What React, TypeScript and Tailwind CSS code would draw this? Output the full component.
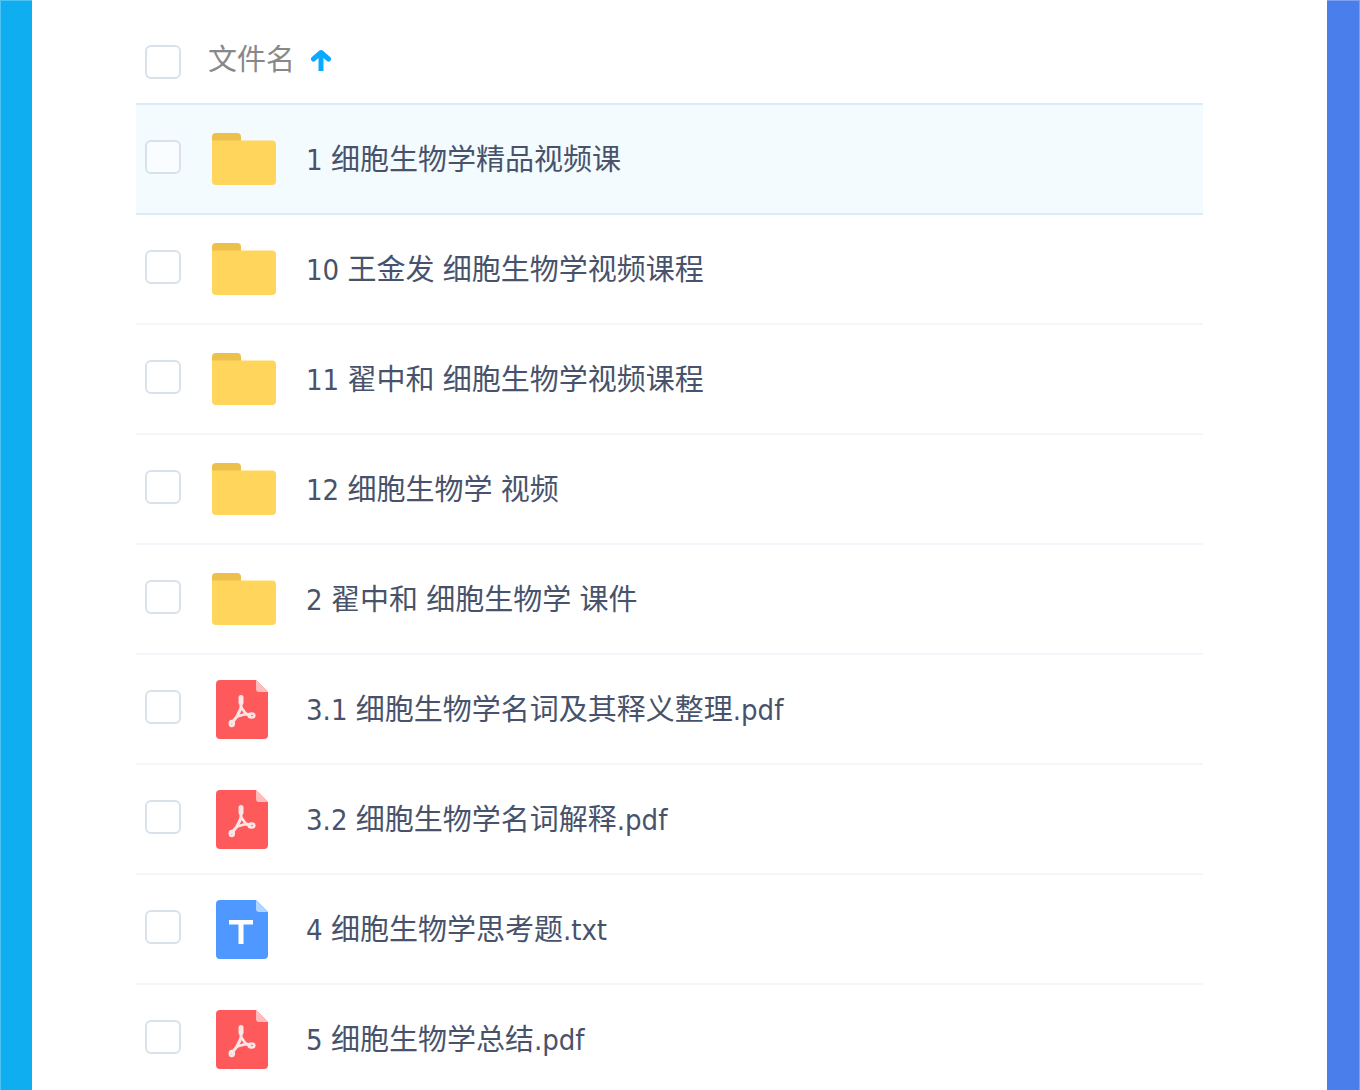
import * as React from 'react'

type FileKind = 'folder' | 'pdf' | 'txt'

type FileItem = {
  name: string
  kind: FileKind
}

const files: FileItem[] = [
  { name: '1 细胞生物学精品视频课', kind: 'folder' },
  { name: '10 王金发 细胞生物学视频课程', kind: 'folder' },
  { name: '11 翟中和 细胞生物学视频课程', kind: 'folder' },
  { name: '12 细胞生物学 视频', kind: 'folder' },
  { name: '2 翟中和 细胞生物学 课件', kind: 'folder' },
  { name: '3.1 细胞生物学名词及其释义整理.pdf', kind: 'pdf' },
  { name: '3.2 细胞生物学名词解释.pdf', kind: 'pdf' },
  { name: '4 细胞生物学思考题.txt', kind: 'txt' },
  { name: '5 细胞生物学总结.pdf', kind: 'pdf' },
]

function FolderIcon() {
  return (
    <svg width="64" height="52" viewBox="0 0 64 52" aria-hidden="true">
      <path d="M0 12V4a4 4 0 0 1 4-4h21a4 4 0 0 1 4 4v8z" fill="#ecc04b" />
      <path d="M0 7.500h60a4 4 0 0 1 4 4V48a4 4 0 0 1-4 4H4a4 4 0 0 1-4-4z" fill="#ffd55c" />
    </svg>
  )
}

function PdfIcon() {
  return (
    <svg width="52" height="59" viewBox="0 0 52 59" aria-hidden="true">
      <path d="M4 0h36l12 12v43a4 4 0 0 1-4 4H4a4 4 0 0 1-4-4V4a4 4 0 0 1 4-4z" fill="#ff5a5b" />
      <path d="M40 0l12 12h-9a3 3 0 0 1-3-3z" fill="#ffbcbc" />
      <g fill="none" stroke="#ffe6e6" strokeWidth="2.600" strokeLinecap="round" strokeLinejoin="round">
        <path d="M25 17.500v5" strokeWidth="5" />
        <path d="M25 22v6l-4 8.500-5 6" strokeWidth="3" />
        <path d="M25 27l5 7-9 2.500" />
        <path d="M30 34l4 1" strokeWidth="3" />
        <ellipse cx="35.500" cy="35.500" rx="2.800" ry="2" />
        <ellipse cx="15.800" cy="43.500" rx="2" ry="2.400" />
      </g>
    </svg>
  )
}

function TxtIcon() {
  return (
    <svg width="52" height="59" viewBox="0 0 52 59" aria-hidden="true">
      <path d="M4 0h36l12 12v43a4 4 0 0 1-4 4H4a4 4 0 0 1-4-4V4a4 4 0 0 1 4-4z" fill="#4f98ff" />
      <path d="M40 0l12 12h-9a3 3 0 0 1-3-3z" fill="#b0d6ff" />
      <rect x="13" y="20" width="24" height="4.500" fill="#fff" />
      <rect x="22.500" y="20" width="5" height="24" fill="#fff" />
    </svg>
  )
}

function FileIcon({ kind }: { kind: FileKind }) {
  if (kind === 'folder') return <FolderIcon />
  return <span className="pl-1">{kind === 'pdf' ? <PdfIcon /> : <TxtIcon />}</span>
}

const checkboxClass =
  'block h-[34px] w-9 appearance-none rounded-md border-2 border-[#d9e1eb] bg-white/60 checked:border-[#09aaff] checked:bg-[#09aaff]'

export default function App() {
  const [selected, setSelected] = React.useState<string[]>([])
  const [hovered, setHovered] = React.useState(files[0].name)
  const [ascending, setAscending] = React.useState(true)

  const rows = ascending ? files : [...files].reverse()
  const allSelected = selected.length === files.length

  const toggle = (name: string) => {
    setSelected((prev) => (prev.includes(name) ? prev.filter((n) => n !== name) : [...prev, name]))
  }

  return (
    <div className="flex min-h-screen bg-white font-['DejaVu_Sans_Condensed','Noto_Sans_CJK_SC',sans-serif]">
      <div className="w-8 shrink-0 border-t border-l border-[#4fc3f4] bg-[#0eaef0]" />

      <main className="min-w-0 flex-1 pr-31 pl-26">
        <table className="w-full border-separate border-spacing-0 text-left text-[29px] leading-10 text-[#48536b]">
          <thead>
            <tr className="h-[105px]">
              <th className="w-18 border-b-2 border-[#dcebfc] pt-5 pl-[9px] font-normal">
                <input
                  type="checkbox"
                  aria-label="全选"
                  className={checkboxClass}
                  checked={allSelected}
                  onChange={() => setSelected(allSelected ? [] : files.map((f) => f.name))}
                />
              </th>
              <th
                className="border-b-2 border-[#dcebfc] pt-4 font-normal text-[#888]"
                aria-sort={ascending ? 'ascending' : 'descending'}
              >
                <button type="button" className="flex items-center gap-4" onClick={() => setAscending(!ascending)}>
                  文件名
                  <svg
                    className={ascending ? '' : 'rotate-180'}
                    width="20"
                    height="24"
                    viewBox="0 0 20 24"
                    fill="none"
                    stroke="#09aaff"
                    strokeWidth="5"
                    aria-hidden="true"
                  >
                    <path d="M2.500 11L10 4.500 17.500 11" strokeLinecap="round" strokeLinejoin="round" />
                    <path d="M10 5v18" />
                  </svg>
                </button>
              </th>
            </tr>
          </thead>
          <tbody>
            {rows.map((file, i) => {
              const active = file.name === hovered
              const cell = active ? 'border-b-2 border-[#dcebfc] bg-[#f3fbff]' : 'border-b-2 border-[#f3f7fc]'
              return (
                <tr key={file.name} className="h-[110px]" onMouseEnter={() => setHovered(file.name)}>
                  <td className={`${cell} pb-1 pl-[9px]`}>
                    <input
                      id={`file-${i}`}
                      type="checkbox"
                      className={checkboxClass}
                      checked={selected.includes(file.name)}
                      onChange={() => toggle(file.name)}
                    />
                  </td>
                  <td className={`${cell} pl-1`}>
                    <label htmlFor={`file-${i}`} className="flex items-center gap-[30px]">
                      <span className="flex w-16 shrink-0">
                        <FileIcon kind={file.kind} />
                      </span>
                      <span className="pt-0.5">{file.name}</span>
                    </label>
                  </td>
                </tr>
              )
            })}
          </tbody>
        </table>
      </main>

      <div className="w-[33px] shrink-0 border-t border-r border-[#7ba1f0] bg-[#4a7eeb]" />
    </div>
  )
}
